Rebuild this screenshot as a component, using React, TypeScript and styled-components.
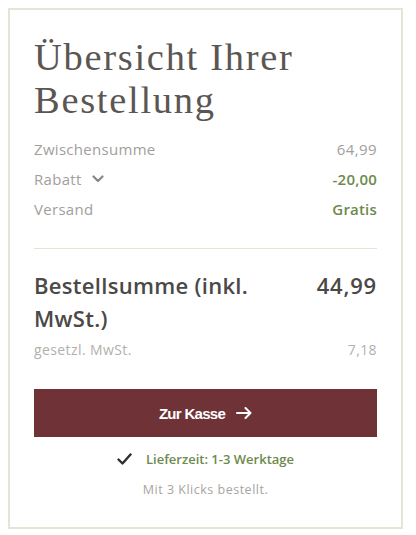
import React from "react";
import styled, { createGlobalStyle } from "styled-components";

const GlobalStyle = createGlobalStyle`
  html, body { margin: 0; padding: 0; background: #ffffff; }
  body { font-family: "Open Sans", "Liberation Sans", sans-serif; }
  * { box-sizing: border-box; }
`;

const Card = styled.section`
  margin: 8px;
  width: 395px;
  border: 2px solid #e6e4d5;
  padding: 26px 24px 29px;
  background: #fff;
`;

const Title = styled.h2`
  margin: 0 0 12px;
  font-family: "Liberation Serif", "Times New Roman", serif;
  font-weight: 400;
  font-size: 38.5px;
  line-height: 43px;
  color: #5b5652;
  letter-spacing: 1.7px;
`;

const Rows = styled.div`
  display: flex;
  flex-direction: column;
  padding-bottom: 24px;
  border-bottom: 1px solid #e6e4d5;
`;

const Row = styled.div`
  display: flex;
  justify-content: space-between;
  align-items: center;
  height: 30px;
  font-size: 15px;
  letter-spacing: 0.3px;
  color: #a29e9b;
`;

const Label = styled.span`
  display: inline-flex;
  align-items: center;
  gap: 10px;
`;

const Value = styled.span<{ $accent?: boolean }>`
  color: ${(p) => (p.$accent ? "#6d8a4c" : "#a29e9b")};
  font-weight: ${(p) => (p.$accent ? 600 : 400)};
  letter-spacing: ${(p) => (p.$accent ? "0.2px" : "0.4px")};
`;

const Total = styled.div`
  display: flex;
  justify-content: space-between;
  align-items: flex-start;
  margin-top: 20px;
  font-size: 22px;
  line-height: 33px;
  font-weight: 600;
  color: #4b4846;
  letter-spacing: 0.3px;
`;

const TotalLabel = styled.span`
  max-width: 240px;
`;

const TotalValue = styled.span`
  letter-spacing: 0.8px;
`;

const TaxRow = styled.div`
  display: flex;
  justify-content: space-between;
  margin-top: 5px;
  font-size: 14px;
  color: #b3afac;
  letter-spacing: 0.4px;
`;

const Button = styled.button`
  margin-top: 30px;
  width: 100%;
  height: 48px;
  border: 0;
  background: #6f3337;
  color: #fff;
  font-family: "Liberation Sans", Arial, sans-serif;
  font-weight: 700;
  font-size: 15px;
  letter-spacing: -0.7px;
  display: flex;
  align-items: center;
  justify-content: center;
  gap: 11px;
  cursor: pointer;
`;

const Delivery = styled.div`
  margin-top: 13px;
  display: flex;
  justify-content: center;
  align-items: center;
  gap: 14px;
  font-size: 13px;
  font-weight: 600;
  color: #6d8a4c;
`;

const Note = styled.p`
  margin: 13px 0 0;
  text-align: center;
  font-size: 12.5px;
  color: #a8a4a1;
  letter-spacing: 0.5px;
`;

const Chevron = () => (
  <svg width="12" height="8" viewBox="0 0 12 8" fill="none">
    <path d="M1.5 1.5 L6 6 L10.5 1.5" stroke="#8a8683" strokeWidth="2.2" strokeLinecap="round" strokeLinejoin="round" />
  </svg>
);

const Arrow = () => (
  <svg width="16" height="12" viewBox="0 0 16 12" fill="none">
    <path d="M1 6 H14.5 M9.5 1 L14.5 6 L9.5 11" stroke="#fff" strokeWidth="2" strokeLinecap="round" strokeLinejoin="round" />
  </svg>
);

const Check = () => (
  <svg width="15" height="12" viewBox="0 0 15 12" fill="none">
    <path d="M1.5 6.5 L5.5 10.5 L13.5 1.5" stroke="#2f2d2c" strokeWidth="2.4" strokeLinecap="round" strokeLinejoin="round" />
  </svg>
);

export default function App() {
  return (
    <>
      <GlobalStyle />
      <Card>
        <Title>Übersicht Ihrer Bestellung</Title>
        <Rows>
          <Row>
            <span>Zwischensumme</span>
            <Value>64,99</Value>
          </Row>
          <Row>
            <Label>
              Rabatt <Chevron />
            </Label>
            <Value $accent>-20,00</Value>
          </Row>
          <Row>
            <span>Versand</span>
            <Value $accent>Gratis</Value>
          </Row>
        </Rows>
        <Total>
          <TotalLabel>Bestellsumme (inkl. MwSt.)</TotalLabel>
          <TotalValue>44,99</TotalValue>
        </Total>
        <TaxRow>
          <span>gesetzl. MwSt.</span>
          <span>7,18</span>
        </TaxRow>
        <Button>
          Zur Kasse <Arrow />
        </Button>
        <Delivery>
          <Check />
          <span>Lieferzeit: 1-3 Werktage</span>
        </Delivery>
        <Note>Mit 3 Klicks bestellt.</Note>
      </Card>
    </>
  );
}
